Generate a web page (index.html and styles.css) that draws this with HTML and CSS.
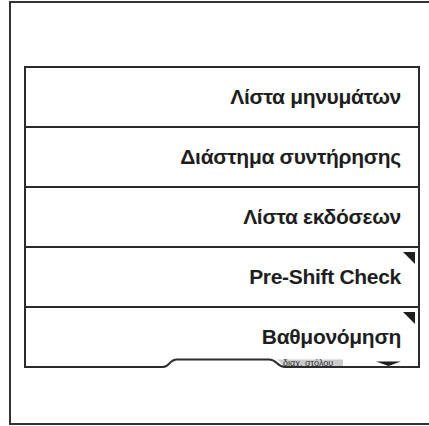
FILE: index.html
```html
<!DOCTYPE html>
<html lang="el">
<head>
  <meta charset="UTF-8" />
  <meta name="viewport" content="width=device-width, initial-scale=1" />
  <title>Μενού</title>
  <link rel="stylesheet" href="styles.css">
</head>
<body>
  <div class="frame">
    <div class="menu">
      <div class="menu-item">Λίστα μηνυμάτων</div>
      <div class="menu-item">Διάστημα συντήρησης</div>
      <div class="menu-item">Λίστα εκδόσεων</div>
      <div class="menu-item has-sub">Pre-Shift Check</div>
      <div class="menu-item has-sub last">
        Βαθμονόμηση
        <!-- bottom edge with the tab notch -->
        <svg class="menu-edge" width="392" height="10" viewBox="0 0 392 10">
          <path d="M250 1.5 C255 1.5 255 9 262 9 H317 V1.5 Z" fill="#cbcbcb" />
          <path d="M0 9 H137 C144 9 143 1.5 151 1.5 H243 C251 1.5 251 9 259 9 H392"
                fill="none" stroke="#2b2b2b" stroke-width="2" />
          <polygon points="350,3.5 375,3.5 362.5,8" fill="#1e1e1e" />
        </svg>
        <span class="fleet-label">διαχ. στόλου</span>
      </div>
    </div>
  </div>
</body>
</html>
```

FILE: styles.css
```css
body {
  margin: 0;
  background: #fff;
  font-family: "Liberation Sans", Arial, sans-serif;
  overflow: hidden;
}
.frame {
  margin: 1px 0 0 9px;
  width: 418px;
  height: 420px;
  border: 2px solid #333;
  border-right: none;
  overflow: hidden;
}
.menu {
  margin: 63px 0 0 13px;
  width: 392px;
  border: 2px solid #2b2b2b;
  border-bottom: none;
}
.menu-item {
  position: relative;
  height: 58px;
  display: flex;
  align-items: center;
  justify-content: flex-end;
  padding-right: 17px;
  border-bottom: 2px solid #2b2b2b;
  font-size: 21px;
  font-weight: bold;
  letter-spacing: -0.3px;
  color: #1e1e1e;
}
.menu-item.last {
  height: 60px;
  border-bottom: none;
  padding-bottom: 2px;
  box-sizing: border-box;
}
.has-sub::after {
  content: "";
  position: absolute;
  top: 4px;
  right: 3px;
  border-top: 12px solid #1e1e1e;
  border-left: 12px solid transparent;
}
.menu-edge {
  position: absolute;
  left: 0;
  bottom: 0;
  display: block;
}
.fleet-label {
  position: absolute;
  left: 257px;
  bottom: 1px;
  font-size: 9px;
  font-weight: normal;
  letter-spacing: 0;
  line-height: 8px;
  color: #333;
}
```
